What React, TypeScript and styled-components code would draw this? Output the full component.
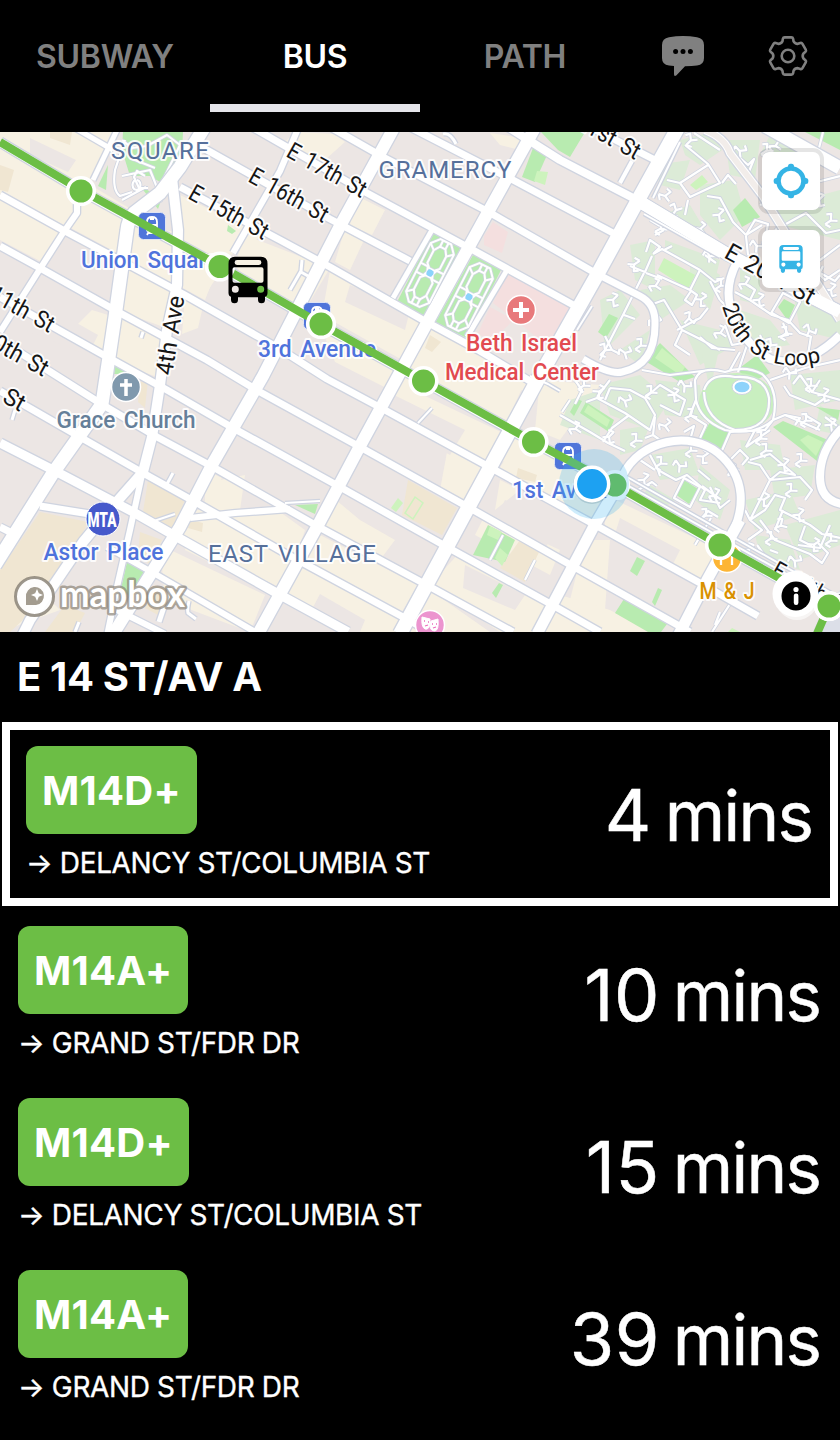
import React from 'react';
import styled, { createGlobalStyle } from 'styled-components';

const GREEN = '#6cbe45';

const GlobalStyle = createGlobalStyle`
  * { box-sizing: border-box; }
  body {
    margin: 0;
    background: #000;
    color: #fff;
    font-family: Inter, "Liberation Sans", sans-serif;
  }
`;

const Page = styled.div`
  width: 840px;
  height: 1440px;
  overflow: hidden;
  display: flex;
  flex-direction: column;
  background: #000;
`;

const Header = styled.nav`
  height: 132px;
  display: grid;
  grid-template-columns: 210px 210px 210px 105px 105px;
  grid-template-rows: 112px;
`;

const Tab = styled.a<{ $active?: boolean }>`
  display: flex;
  align-items: center;
  justify-content: center;
  border-bottom: 8px solid ${(p) => (p.$active ? '#e5e5ea' : 'transparent')};
  padding-top: 10px;
  font-size: 32px;
  line-height: 40px;
  font-weight: 600;
  letter-spacing: -0.3px;
  color: ${(p) => (p.$active ? '#fff' : '#808080')};
`;

const IconTab = styled.a`
  display: flex;
  align-items: center;
  justify-content: center;
`;

const MapArea = styled.section`
  position: relative;
  height: 500px;
  background: #ece6e4;
  overflow: hidden;
`;

const MapCanvas = styled.svg`
  display: block;
  width: 840px;
  height: 500px;
`;

const MapControls = styled.div`
  position: absolute;
  top: 20px;
  right: 20px;
  display: flex;
  flex-direction: column;
  gap: 20px;
`;

const MapButton = styled.button`
  width: 58px;
  height: 58px;
  padding: 0;
  border: 0;
  border-radius: 7px;
  background: #fff;
  box-shadow: 0 0 0 4px rgba(0, 0, 0, 0.1);
  display: flex;
  align-items: center;
  justify-content: center;
`;

const StationTitle = styled.h1`
  margin: 0;
  height: 90px;
  padding: 0 17px;
  display: flex;
  align-items: center;
  font-size: 40px;
  line-height: 48px;
  font-weight: 700;
  letter-spacing: -0.35px;
`;

const Arrivals = styled.div`
  display: flex;
  flex-direction: column;
  gap: 4px;
`;

const Arrival = styled.div<{ $selected?: boolean }>`
  display: flex;
  align-items: center;
  justify-content: space-between;
  height: ${(p) => (p.$selected ? 184 : 168)}px;
  margin: ${(p) => (p.$selected ? '0 2px' : '0')};
  padding: ${(p) => (p.$selected ? '16px' : '16px 18px')};
  border: ${(p) => (p.$selected ? '8px solid #fff' : '0')};
`;

const RouteInfo = styled.div`
  height: 136px;
  display: flex;
  flex-direction: column;
  align-items: flex-start;
  gap: 12px;
`;

const Badge = styled.span`
  height: 88px;
  padding: 0 16px;
  display: flex;
  align-items: center;
  border-radius: 12px;
  background: ${GREEN};
  font-size: 40px;
  font-weight: 700;
  letter-spacing: 0.25px;
`;

const Destination = styled.span`
  font-size: 28px;
  line-height: 34px;
  letter-spacing: -0.37px;
  -webkit-text-stroke: 0.35px #fff;
  white-space: nowrap;
`;

const Minutes = styled.span`
  display: flex;
  align-items: baseline;
  gap: 13px;
  padding: 2px 2px 0 0;
  font-size: 72px;
  line-height: 88px;
  letter-spacing: 0.5px;
  -webkit-text-stroke: 0.5px #fff;
  white-space: nowrap;
`;

const Unit = styled.span`
  font-size: 69px;
  letter-spacing: -1.8px;
`;

const MapText = styled.text<{ $weight?: number }>`
  font-family: Roboto, "Open Sans", sans-serif;
  font-weight: ${(p) => p.$weight ?? 400};
  word-spacing: 3px;
  paint-order: stroke;
  stroke: rgba(255, 255, 255, 0.9);
  stroke-width: 4px;
  stroke-linejoin: round;
`;

const BUS_PATH =
  'M7 0H33Q39.500 0 39.500 7V36Q39.500 39.500 37 40V43Q37 46.500 33.500 46.500T30 43V40.500H10V43Q10 46.500 6.500 46.500T3 43V40Q0.500 39.500 0.500 36V7Q0.500 0 7 0Z' +
  'M9 3.400A2.400 2.400 0 0 0 9 8.200H31A2.400 2.400 0 0 0 31 3.400Z' +
  'M6.500 10.500Q4.500 10.500 4.500 12.500V24Q4.500 26 6.500 26H33.500Q35.500 26 35.500 24V12.500Q35.500 10.500 33.500 10.500Z' +
  'M7.300 29A3.500 3.500 0 1 0 7.300 36A3.500 3.500 0 1 0 7.300 29Z' +
  'M32.700 29A3.500 3.500 0 1 0 32.700 36A3.500 3.500 0 1 0 32.700 29Z';

const BusIcon = () => (
  <svg width="24" height="28" viewBox="0 0 40 46.500">
    <path d={BUS_PATH} fill="#35b4e5" fillRule="evenodd" />
  </svg>
);

const LocateIcon = () => (
  <svg width="36" height="36" viewBox="-18 -18 36 36">
    <circle r="12.500" fill="none" stroke="#35b4e5" strokeWidth="4.600" />
    {[0, 90, 180, 270].map((a) => (
      <rect key={a} x="-3" y="-17.300" width="6" height="6" rx="2.500" fill="#35b4e5" transform={`rotate(${a})`} />
    ))}
  </svg>
);

const ChatIcon = () => (
  <svg width="42" height="42" viewBox="0 -1 42 42">
    <path d="M7 1.200Q21-1 35 1.200Q42 2.400 42 9V22Q42 28.800 35 29.600Q30 30.200 23 30.300L14.500 39.200Q12 41 12 38V30L7 29.600Q0 28.800 0 22V9Q0 2.400 7 1.200Z" fill="#808080" />
    <circle cx="13.600" cy="15.500" r="2.500" />
    <circle cx="21" cy="15.500" r="2.500" />
    <circle cx="28.400" cy="15.500" r="2.500" />
  </svg>
);

const gearPoint = (x: number, y: number, k: number) => {
  const a = (k * Math.PI) / 3;
  return `${(x * Math.cos(a) - y * Math.sin(a)).toFixed(2)} ${(x * Math.sin(a) + y * Math.cos(a)).toFixed(2)}`;
};
const GEAR_PATH =
  [0, 1, 2, 3, 4, 5]
    .map(
      (k) =>
        `${k ? 'L' : 'M'}${gearPoint(-5.6, -14.6, k)}L${gearPoint(-5.1, -17.2, k)}Q${gearPoint(-4.8, -18.6, k)} ${gearPoint(-3.3, -18.6, k)}` +
        `L${gearPoint(3.3, -18.6, k)}Q${gearPoint(4.8, -18.6, k)} ${gearPoint(5.1, -17.2, k)}L${gearPoint(5.6, -14.6, k)}` +
        `Q${gearPoint(7, -12, k)} ${gearPoint(-5.6, -14.6, k + 1)}`
    )
    .join('') + 'Z';

const GearIcon = () => (
  <svg width="42" height="42" viewBox="-21 -21 42 42" fill="none" stroke="#808080" strokeWidth="2.600" strokeLinejoin="round">
    <path d={GEAR_PATH} />
    <circle r="6.300" />
  </svg>
);

/* Land use: [colour, polygons] in map units. */
const CREAM = '#f7f1e3';
const SCHOOL = '#f0e6d2';
const PARK = '#b8ebb0';
const LAWN = '#cdf3bd';
const GRASS = '#dcebd7';
const PINK = '#f4dfdf';
const BUILT = '#ece6e4';
const areas: [string, string[]][] = [
  [CREAM, [
    '0,132 120,132 75,208 60,230 0,197', '75,208 92,186 220,262 205,300 0,190', '0,197 60,232 42,262 0,240',
    '65,235 128,262 122,310 96,298 87,290 75,240', '92,310 118,318 108,360 68,334', '130,225 178,232 178,290 126,264',
    '126,268 180,296 172,330 122,312', '120,318 165,335 160,378 116,362', '180,195 232,220 262,236 232,254 205,295 183,288',
    '185,296 203,306 198,328 182,334', '297,132 335,134 345,142 325,160 280,145', '355,195 385,210 372,235 350,225',
    '345,228 365,238 350,270 335,262', '330,270 348,280 520,378 540,380 530,392 420,370 322,315', '245,235 330,268 302,315 255,290 235,265',
    '320,325 430,384 410,400 335,362', '405,335 478,355 525,382 505,425 445,395 400,380', '400,384 535,448 495,465 390,410',
    '452,425 488,465 465,505 440,490', '505,460 535,440 590,480 615,490 600,520 560,505 498,470', '500,480 520,490 495,510',
    '605,495 720,550 695,585 605,530', '540,380 600,385 560,440 535,430', '220,480 245,475 240,510 275,540 265,590 185,550 195,515',
    '205,470 222,478 205,505', '330,495 360,520 395,540 380,560 320,530', '195,510 280,512 305,530 285,590 180,538',
    '160,545 265,595 250,632 165,600', '320,535 418,585 400,615 300,560', '285,560 400,615 395,632 352,632 283,590',
    '430,590 490,632 405,632', '460,552 545,600 545,632 500,632 430,585', '485,515 560,550 550,575 475,535', '610,540 605,610 570,600 585,540',
    '560,595 610,610 650,632 545,632', '490,133 535,140 528,152 500,145', '0,560 30,580 60,610 0,632',
  ]],
  [BUILT, ['30,138 76,160 68,172 30,155', '76,242 118,265 114,310 60,285 50,262', '350,285 410,310 405,330 345,302',
    '392,394 465,430 450,455 388,420', '620,518 680,550 665,580 610,550', '320,594 365,620 360,632 300,632', '505,500 553,520 545,555 495,520',
    '465,565 525,595 515,610 463,588', '45,305 98,335 88,355 25,330']],
  [SCHOOL, [
    '0,165 14,170 8,192 0,190', '50,132 72,132 70,145 50,138', '40,512 88,522 55,590 10,632 0,632 0,570', '148,480 185,500 172,530 143,512',
    '408,480 457,508 442,535 402,515', '520,540 539,552 525,582 500,568', '140,532 162,540 152,566 138,555', '65,605 85,613 75,632 45,632',
    '155,585 168,595 158,615 145,608', '190,520 203,523 202,532 188,528', '518,468 537,475 535,482 516,478', '430,335 441,342 432,352 425,348', '140,382 148,380 145,408 138,402',
  ]],
  [PARK, [
    '123,132 183,132 182,152 160,182 150,176 130,176 122,150', '140,186 162,198 158,209', '108,165 106,190 98,186',
    '228,225 236,231 232,234 227,231', '116,362 127,365 123,374 114,374', '127,562 145,571 133,600 121,588',
    '295,505 318,504 315,514', '433,232 462,247 425,317 397,302', '473,255 502,268 467,338 435,323', '522,177 533,148 547,155 535,182',
    '541,132 585,132 570,157 558,150', '733,210 745,198 760,217 742,227', '778,307 784,299 795,305 788,321', '598,332 609,314 618,318 606,338',
    '645,361 660,343 695,377 680,382', '737,370 757,355 770,373 752,382', '700,440 710,422 730,433 722,454', '773,427 783,421 828,440 817,461',
    '580,413 586,402 614,420 609,432', '675,494 684,480 698,489 689,504', '615,613 624,599 667,624 661,632 648,632',
    '630,571 637,557 645,561 637,576', '652,602 658,588 662,590 655,606', '488,525 515,540 505,562 473,555',
    '492,593 499,583 503,585 496,598', '570,412 577,399 582,401 574,416', '805,132 840,132 840,150', '816,407 840,410 838,420',
  ]],
  [LAWN, ['537,171 548,172 545,185 534,181', '690,185 702,175 708,182 696,190', '658,270 664,258 695,275 688,289', '398,498 403,503 396,512 391,508',
    '655,358 662,348 685,367 680,375', '800,440 808,435 823,442 816,456', '584,412 588,405 610,420 607,427', '490,526 502,532 498,540 487,535', '495,558 500,548 508,555 502,566', '728,632 732,628 740,632']],
  [PINK, ['507,273 578,308 553,350 493,303', '490,307 514,320 490,342 478,333', '484,236 493,222 508,232 502,253 484,245', '560,303 572,308 565,330 560,328']],
];

const grassPatches = [
  '680,140 712,132 722,150 700,165 685,155', '655,165 690,160 680,190 660,185', '700,185 735,180 745,215 720,240 700,215', '725,140 760,140 755,180 730,175',
  '660,215 690,205 705,230 690,240', '770,135 800,150 790,165 760,155', '765,210 840,190 840,240 780,225', '665,240 720,260 715,280 665,252', '630,245 655,240 655,290 635,280',
  '640,290 670,285 690,300 660,320', '690,255 720,275 710,310 690,285', '740,265 760,270 760,305 740,300', '740,310 770,320 790,345 755,350', '790,275 840,320 840,340 800,330',
  '680,320 720,330 735,345 700,365', '600,300 620,290 640,315 605,350', '620,350 650,330 640,365', '655,380 700,385 705,420 665,415', '600,385 640,375 670,400 650,430 610,415',
  '570,400 600,390 600,440 560,425', '620,430 650,425 640,450 620,455', '650,455 690,448 700,475 660,480', '700,465 730,490 720,520 695,500', '740,440 780,445 785,470 745,470', '770,470 815,465 810,495 775,500',
  '745,500 790,490 800,515 755,530', '785,525 840,510 840,545 800,560', '755,535 790,540 800,570 760,555', '650,485 675,500 660,510 640,500', '790,375 840,370 840,400 795,410', '820,405 840,420 840,435 815,430', '710,390 700,345 720,345',
];

/* Streets: [centre line, width]. */
const roads: [string, number][] = [
  ['M0 142L80 190L219 266L320 324L423 381L533 442L614 485L719 545L840 612', 9],
  ['M0 195L63 230L127 264L183 294L280 349L327 379L383 409L493 469L597 526L700 583L758 616', 7],
  ['M0 246L40 268L120 313L207 360L260 392L360 447L468 507L560 559L690 632', 7],
  ['M0 297L100 353L167 390L233 428L340 487L447 547L547 602L600 632', 7],
  ['M0 340L103 405L157 437L213 467L317 526L423 583L513 632', 7],
  ['M0 391L80 437L143 473L197 503L283 552L403 617L430 632', 7],
  ['M0 443L57 472L133 512L177 537L273 591L348 632', 9],
  ['M40 506L90 514', 7], ['M0 527L14 534', 7], ['M190 518L235 513L290 509', 6], ['M107 547L157 575L255 632', 6], ['M117 610L165 634', 6],
  ['M180 187L280 240L330 267L423 320L480 351L535 384', 7],
  ['M198 145L330 219L410 261', 7], ['M250 126L367 193L473 250L577 307', 7], ['M325 124L383 157L487 211L597 274', 7],
  ['M400 122L513 180L613 233', 7], ['M500 122L560 160L637 200', 8], ['M637 200L727 254L840 312', 12], ['M580 122L657 161', 7],
  ['M75 128L113 150', 5], ['M118 128L93 180', 5], ['M765 126L840 168', 13], ['M705 130Q725 138 730 153L762 195L840 320', 8],
  ['M77 198V213L63 233L38 272L0 332', 6],
  ['M204 128L180 167L160 193L134 213Q128 220 127 230L115 317L102 404L53 473L-5 565', 13],
  ['M172 178L178 230L177 285L167 330L160 385L152 437L143 472L113 506L83 542L30 620L22 636', 10],
  ['M143 470L130 530L117 587L107 636', 6],
  ['M395 126L340 226L263 376L213 463L180 527L112 636', 12],
  ['M536 126L487 214L427 323L360 446L317 527L258 634', 12],
  ['M680 124L638 200L597 275L537 381L468 508L400 634', 14],
  ['M620 482L593 528L537 634', 11], ['M740 520L707 580L678 636', 11], ['M300 124L280 171L233 253', 6],
  ['M432 230L393 298', 5], ['M507 270L467 337', 5], ['M632 161L620 183', 4],
  ['M603 277L640 296Q656 304 655 325Q655 365 622 372Q610 375 583 359', 7],
  ['M737 262Q725 285 730 305Q740 342 770 359Q805 370 840 335', 8],
  ['M623 475C640 440 690 430 718 453C748 478 743 510 733 532', 8],
  ['M842 428Q820 450 820 477Q820 500 842 504', 8],
  ['M170 589L159 622', 5], ['M189 601Q187 610 188 613L196 619', 3], ['M432 408L418 423', 2], ['M173 473L167 484', 3], ['M143 332L141 338', 3], ['M15 410L12 420', 3],
  ['M302 260L301 271L290 290M301 272L308 276', 3], ['M443 134Q450 132 456 144', 3], ['M627 485L840 604M627 477L840 598', 2],
  ['M653 198L680 142M644 214L720 257M592 306L577 330M530 376L548 384L560 391', 2], ['M75 632L79 622', 3],
  ['M154 521L175 514', 2], ['M285 503L320 501', 2],
];

const footpaths = [
  'M125 140L115 170Q112 190 120 196L132 192M122 176L150 170L158 190L165 176L180 145L167 135L147 146L132 148L122 140M130 158L155 168M148 188L139 188L134 177L137 171L145 176',
  'M136 180A4 5 0 1 0 137 180M122 200L146 187M150 206L162 200',
  'M685 145L708 164L720 183L690 197L680 183L708 165M688 200L685 215M667 180L680 183M707 196L720 198L733 222L746 235L762 225',
  'M722 183L728 175L736 184M740 158L748 165L754 159L748 174M694 133L720 150M746 235L755 220L768 224L766 235L780 240M746 236L748 255',
  'M760 205L805 185L840 176M775 230L806 213L826 233L840 230M823 132L818 152L840 164M800 275L840 245M805 260L825 280L840 270',
  'M653 254L662 249L700 270L690 290L657 275M646 252L650 240L660 247L653 254M652 256L645 272L630 266M646 273L662 279M700 270L715 282L724 278M710 281L720 300M690 290L697 295L692 305L685 300L691 291',
  'M644 273L623 315L600 360M624 315L635 319M605 336L612 350L620 354M650 305L664 300L682 330L698 338L720 350M682 330L675 345L690 355M677 330L700 318L708 308M700 337L712 348L735 350',
  'M664 250L672 246M655 235L664 230M650 220L660 226M705 255L716 263M720 300L730 310M735 292L750 300L772 315L788 320L800 333L812 337M770 315L783 293L800 302L789 323L772 313',
  'M750 300L755 290L748 285M783 323L788 335L778 337M725 325L732 345L748 342M748 342L738 372M760 335L767 352L755 355M811 336L808 355M805 265L835 281L840 275M823 266L818 276',
  'M695 380Q700 365 725 372Q745 365 762 374Q780 390 773 420Q755 436 725 430Q700 420 696 400ZM704 390Q710 372 735 377Q765 375 769 398Q771 430 735 430Q705 420 704 392M696 400L690 415L706 425L700 438M773 420L785 415L820 430M773 420L765 430L730 432L720 455M710 370L670 375L642 370M770 380L805 368L840 360M730 370L740 352M755 430L746 447',
  'M560 415L590 432L608 443L625 451M575 404L582 390L575 380M586 402L597 398L625 413L650 430L655 415L645 398L630 390L610 388M610 388L605 400M597 397L610 380M603 442L612 428L628 416',
  'M645 398L660 385L685 400L680 415L660 405M655 417L653 435L660 440M653 435L645 438M684 432L694 426L690 440L680 437M650 455L658 470L676 480L687 475L705 490L700 500L720 503M658 470L660 476',
  'M674 498L684 478L700 487L690 507ZM702 486L718 498M710 487L720 508L730 500M698 470L710 480M638 490L652 482L657 486M700 520L708 511L718 517M720 456L735 465L728 475M730 460L740 450L748 458L742 465',
  'M750 460L770 454L795 475L780 472L770 480L750 520L745 510M770 480L760 465L748 462M770 480L800 477L812 490L805 500M750 520L765 510L775 495L785 498L780 510L810 525L822 534L840 538M760 520L775 540L810 554L822 563L828 553L818 543M750 520L762 530L748 540M783 510L775 530M805 526L800 540L812 546',
  'M798 545L820 548L830 525M765 556L757 545M770 550L778 553M640 460L655 470M746 447L770 430M785 415L800 418L795 425M805 415L820 424L816 430M825 417L840 428M784 386L790 395L815 405L825 398M800 375L812 392L840 400M812 392L820 380M793 384L800 375',
  'M695 545L711 518M570 400L562 412M535 560L525 580M503 535L490 560M815 632L825 610M730 604L712 632M720 612L715 625',
];

const hooks: [number, number, number][] = [
  [690, 140, 20], [665, 195, 80], [720, 215, 200], [675, 210, 10], [740, 150, 110], [766, 150, 30], [775, 145, 60], [700, 228, 75],
  [660, 228, 35], [710, 255, 120], [720, 285, 30], [635, 265, 210], [655, 285, 60], [702, 300, 210], [640, 345, 30], [690, 318, 160],
  [745, 283, 60], [760, 300, 200], [745, 330, 80], [785, 333, 30], [810, 330, 140], [770, 345, 20], [720, 332, 60], [655, 322, 90],
  [614, 300, 200], [604, 350, 20], [625, 352, 100], [583, 385, 30], [600, 392, 210], [575, 428, 60], [610, 437, 200], [635, 440, 30],
  [625, 400, 100], [650, 392, 30], [675, 395, 200], [665, 425, 80], [685, 385, 120], [690, 450, 30], [704, 457, 210], [660, 463, 30],
  [645, 480, 200], [680, 465, 120], [715, 495, 60], [705, 515, 30], [735, 475, 200], [765, 450, 30], [785, 465, 200], [800, 460, 30],
  [790, 490, 30], [765, 500, 210], [780, 525, 40], [800, 515, 200], [770, 538, 30], [795, 560, 110], [815, 545, 210], [830, 540, 30],
  [750, 550, 200], [810, 385, 30], [825, 395, 200], [790, 372, 120], [805, 420, 30], [832, 425, 200], [760, 438, 30], [690, 415, 40],
  [830, 220, 30], [820, 200, 200], [780, 230, 30], [832, 290, 200], [800, 290, 30], [757, 245, 120],
];

const gardens: [number, number][] = [[430, 273], [469, 297]];
const stops: [number, number][] = [[81, 191], [220, 266.5], [321, 324], [423.5, 381], [533.5, 442], [615, 485], [720, 545], [829, 606]];

const Station = ({ x, y }: { x: number; y: number }) => (
  <g transform={`translate(${x} ${y})`}>
    <rect x="-13.500" y="-13.500" width="27" height="27" rx="5" fill="#5075da" stroke="#dfe3f3" strokeWidth="1" />
    <path d="M-5-4Q-5-9 0-9T5-4V4Q5 5 4 5H-4Q-5 5-5 4ZM-5-1H5M-2-7H2M-3 5L-5 9M3 5L5 9M-4 7H4" fill="none" stroke="#fff" strokeWidth="1.800" />
  </g>
);

type LabelProps = { x: number; y: number; width: number; color: string; children: string; size?: number; weight?: number; anchor?: 'start' | 'middle' | 'end'; angle?: number };
const Label = ({ x, y, width, color, children, size = 24, weight = 400, anchor = 'middle', angle = 0 }: LabelProps) => (
  <MapText
    x={x}
    y={y}
    textLength={width}
    lengthAdjust={angle || weight > 400 ? 'spacingAndGlyphs' : 'spacing'}
    fontSize={size}
    $weight={weight}
    fill={color}
    textAnchor={anchor}
    transform={angle ? `rotate(${angle} ${x} ${y})` : undefined}
  >
    {children}
  </MapText>
);

const CityMap = () => (
  <MapCanvas viewBox="0 132 840 500">
    <rect y="132" width="840" height="500" fill={BUILT} />
    {areas.slice(0, 2).map(([fill, polys], i) => <g key={i} fill={fill}>{polys.map((p) => <polygon key={p} points={p} />)}</g>)}
    <g fill={GRASS}>{grassPatches.map((p) => <polygon key={p} points={p} />)}</g>
    {areas.slice(2).map(([fill, polys], i) => <g key={i} fill={fill}>{polys.map((p) => <polygon key={p} points={p} />)}</g>)}
    <path d="M415 497L423 503L413 519L405 513Z" fill="none" stroke={LAWN} strokeWidth="1.500" />
    <ellipse cx="737" cy="402" rx="38" ry="29" fill="#c9efc0" />
    <polygon points="825,605 840,590 840,632 820,632" fill="#dcdfe8" />

    <g fill="none" strokeLinejoin="round">
      <g stroke="#cfd4e0" strokeWidth="3.800">
        {footpaths.map((d) => <path key={d} d={d} />)}
        {hooks.map(([x, y, a], i) => <path key={i} d="M-6-3L-2-6L1 0L7-3M1 0L-2 6M-2 6L4 6" transform={`translate(${x} ${y}) rotate(${a})`} />)}
      </g>
      <g stroke="#fff" strokeWidth="2.200">
        {footpaths.map((d) => <path key={d} d={d} />)}
        {hooks.map(([x, y, a], i) => <path key={i} d="M-6-3L-2-6L1 0L7-3M1 0L-2 6M-2 6L4 6" transform={`translate(${x} ${y}) rotate(${a})`} />)}
      </g>
      <g stroke="#cfd4e0">{roads.map(([d, w]) => <path key={d} d={d} strokeWidth={w + 2.6} />)}</g>
      <g stroke="#fff">{roads.map(([d, w]) => <path key={d} d={d} strokeWidth={w} />)}</g>
    </g>
    <path d="M705 130Q725 138 730 153L762 195L840 320" fill="none" stroke="#f2edea" strokeWidth="6" />
    <path d="M637 200L727 254L840 312" fill="none" stroke="#fff" strokeWidth="12" />

    {gardens.map(([x, y]) => (
      <g key={x} transform={`translate(${x} ${y}) rotate(27)`}>
        {['#cfd4e0', '#fff'].map((stroke, i) => (
          <g key={stroke} fill="none" stroke={stroke} strokeWidth={i ? 2 : 3.4}>
            <path d="M-6-35H6L13-27V27L6 35H-6L-13 27V-27ZM-7-8V-22L-3-28H3L7-22V-8L3-4H-3ZM-7 8V22L-3 28H3L7 22V8L3 4H-3Z" />
            <path d="M-13-5H-5L-3 0L-5 5H-13M13-5H5L3 0L5 5H13M-3-28V-35M3-28V-35M-3 28V35M3 28V35M-7-22L-13-27M7-22L13-27M-7 22L-13 27M7 22L13 27" />
          </g>
        ))}
        <circle r="3.500" fill="#8bd3fc" />
      </g>
    ))}
    <ellipse cx="742" cy="387" rx="10" ry="7.500" fill="#fff" stroke="#cfd4e0" />
    <ellipse cx="742" cy="387" rx="7.500" ry="5.200" fill="#8fd3fb" />

    <Label x={160} y={159} width={98} color="#56709b">SQUARE</Label>
    <Label x={445} y={178} width={133} color="#56709b">GRAMERCY</Label>
    <Label x={292} y={562} width={168} color="#56709b">EAST VILLAGE</Label>
    <Label x={187} y={198} width={87} color="#161616" angle={29} anchor="start">E 15th St</Label>
    <Label x={247} y={181} width={87} color="#161616" angle={29} anchor="start">E 16th St</Label>
    <Label x={285} y={156} width={87} color="#161616" angle={29} anchor="start">E 17th St</Label>
    <Label x={49} y={333} width={70} color="#161616" angle={29} anchor="end">11th St</Label>
    <Label x={43} y={377} width={72} color="#161616" angle={29} anchor="end">10th St</Label>
    <Label x={20} y={412} width={64} color="#161616" angle={29} anchor="end">9th St</Label>
    <Label x={635} y={160} width={88} color="#161616" angle={29} anchor="end">E 21st St</Label>
    <Label x={723} y={257} width={99} color="#161616" angle={29} anchor="start">E 20th St</Label>
    <Label x={770} y={575} width={85} color="#161616" angle={29} anchor="start">E 14th St</Label>
    <Label x={172} y={376} width={80} color="#161616" angle={-81} anchor="start">4th Ave</Label>
    <path id="loop-label" d="M722 306Q733 343 761 358Q790 373 838 357" fill="none" />
    <MapText fontSize={22} fill="#161616"><textPath href="#loop-label" textLength={128}>20th St Loop</textPath></MapText>

    <Station x={152} y={226} />
    <Station x={317} y={316} />
    <Station x={568} y={456} />
    <Label x={81} y={268} width={137} color="#4f73dc" weight={500} anchor="start">Union Square</Label>
    <Label x={317} y={357} width={118} color="#4f73dc" weight={500}>3rd Avenue</Label>
    <Label x={512} y={498} width={113} color="#4f73dc" weight={500} anchor="start">1st Avenue</Label>
    <Label x={103.5} y={560} width={120} color="#4f73dc" weight={500}>Astor Place</Label>
    <Label x={126} y={428} width={139} color="#657f99" weight={500}>Grace Church</Label>
    <Label x={521.5} y={351} width={111} color="#e24a50" weight={500}>Beth Israel</Label>
    <Label x={522} y={380} width={154} color="#e24a50" weight={500}>Medical Center</Label>
    <Label x={727} y={599} width={55} color="#d99100" weight={500}>M &amp; J</Label>

    <circle cx="126" cy="387" r="14.500" fill="#8099ad" stroke="#fff" strokeWidth="1.500" />
    <path d="M126 379V396M120 385H132" stroke="#fff" strokeWidth="3.500" />
    <circle cx="521" cy="310" r="14.500" fill="#e8797b" stroke="#fff" strokeWidth="1.500" />
    <path d="M521 302V318M513 310H529" stroke="#fff" strokeWidth="4" />
    <circle cx="103" cy="519" r="17" fill="#4659cb" stroke="#fff" strokeWidth="1" />
    <text x="87.500" y="527" fontSize="21" fontWeight="900" fontFamily="Roboto, sans-serif" fill="#fff" textLength="29" lengthAdjust="spacingAndGlyphs">MTA</text>
    <circle cx="430" cy="625" r="14.500" fill="#ec94cf" stroke="#fff" strokeWidth="1.500" />
    <path d="M422 617L430 619V624Q429 630 425 629Q421 627 422 617ZM431 621L438 619Q439 630 435 631Q430 631 430 625Z" fill="#fff" stroke="#fff" />
    <path d="M424 621H425M428 622H429M425 626L428 625M432 624H433M436 624H437M433 628L436 627" stroke="#ec6fbd" strokeWidth="1.300" />
    <circle cx="727" cy="558" r="14.500" fill="#fdb534" stroke="#fff" strokeWidth="1.500" />
    <path d="M721 551V565M725 551V557L721 559M732 551V565" stroke="#fff" strokeWidth="2.300" fill="none" />

    <path d="M0 142L81 190L220 266L321 324L424 381L534 442L615 485L720 545L829 606L816 636" fill="none" stroke={GREEN} strokeWidth="8" strokeLinejoin="round" />
    {stops.map(([x, y]) => <circle key={x} cx={x} cy={y} r="13.300" fill={GREEN} stroke="#fff" strokeWidth="3.600" />)}
    <circle cx="594" cy="484" r="35" fill="#3bb2ee" fillOpacity="0.250" />
    <circle cx="592" cy="485" r="19" fill="#245b7a" fillOpacity="0.180" />
    <circle cx="592" cy="484" r="16.700" fill="#1da1f2" stroke="#fff" strokeWidth="3.500" />
    <path d={BUS_PATH} fillRule="evenodd" transform="translate(228 256.700)" />

    <g stroke="#8b8478" strokeOpacity="0.850" fill="none">
      <circle cx="34.500" cy="596.500" r="19" fill="#fff" fillOpacity="0.920" strokeWidth="3" />
      <path d="M26 605V597A9 9 0 1 1 36 605Z" fill="#a39c8f" stroke="none" />
      <path d="M37 589L38.800 593.200L43 595L38.800 596.800L37 601L35.200 596.800L31 595L35.200 593.200Z" fill="#fff" stroke="none" />
      <text x="60" y="606.500" fontFamily="Lato, sans-serif" fontWeight="700" fontSize="37" textLength="125" lengthAdjust="spacingAndGlyphs" fill="#fff" strokeWidth="5" strokeLinejoin="round" strokeOpacity="0.700" paintOrder="stroke">mapbox</text>
    </g>
    <circle cx="797" cy="599" r="21" fill="#fff" fillOpacity="0.600" />
    <circle cx="795.500" cy="594" r="23" fill="#fff" />
    <circle cx="796" cy="596" r="14.500" fill="#000" />
    <circle cx="796" cy="589.500" r="2.600" fill="#fff" />
    <rect x="793.800" y="593.500" width="4.600" height="11.500" rx="2.200" fill="#fff" />
    <circle cx="829" cy="606" r="13.300" fill={GREEN} stroke="#fff" strokeWidth="3.600" />
  </MapCanvas>
);

const arrivals = [
  { route: 'M14D+', to: 'DELANCY ST/COLUMBIA ST', mins: 4, selected: true },
  { route: 'M14A+', to: 'GRAND ST/FDR DR', mins: 10 },
  { route: 'M14D+', to: 'DELANCY ST/COLUMBIA ST', mins: 15 },
  { route: 'M14A+', to: 'GRAND ST/FDR DR', mins: 39 },
];

export default function App() {
  return (
    <Page>
      <GlobalStyle />
      <Header>
        <Tab>SUBWAY</Tab>
        <Tab $active>BUS</Tab>
        <Tab>PATH</Tab>
        <IconTab aria-label="Messages"><ChatIcon /></IconTab>
        <IconTab aria-label="Settings"><GearIcon /></IconTab>
      </Header>
      <MapArea>
        <CityMap />
        <MapControls>
          <MapButton aria-label="Locate me"><LocateIcon /></MapButton>
          <MapButton aria-label="Show buses"><BusIcon /></MapButton>
        </MapControls>
      </MapArea>
      <StationTitle>E 14 ST/AV A</StationTitle>
      <Arrivals>
        {arrivals.map((a) => (
          <Arrival key={a.mins} $selected={a.selected}>
            <RouteInfo>
              <Badge>{a.route}</Badge>
              <Destination>→ {a.to}</Destination>
            </RouteInfo>
            <Minutes>
              <span>{a.mins}</span>
              <Unit>mins</Unit>
            </Minutes>
          </Arrival>
        ))}
      </Arrivals>
    </Page>
  );
}
